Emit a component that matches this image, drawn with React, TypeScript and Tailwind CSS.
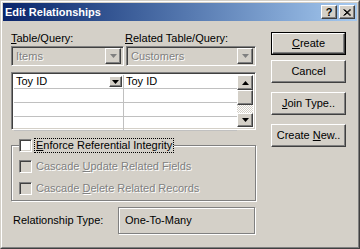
import React from 'react';

const raised =
  'border border-t-white border-l-white border-r-[#404040] border-b-[#404040] shadow-[inset_-1px_-1px_0_#808080] bg-[#d4d0c8]';
const sunken =
  'border border-t-[#808080] border-l-[#808080] border-r-white border-b-white shadow-[inset_1px_1px_0_#404040,inset_-1px_-1px_0_#d4d0c8]';
const etched = 'border border-[#808080] shadow-[inset_1px_1px_0_#fff,1px_1px_0_#fff]';
const disabledText = 'text-[#808080] [text-shadow:1px_1px_0_#fff]';

const Arrow: React.FC<{ dir: 'up' | 'down'; color?: string }> = ({ dir, color = '#000' }) => (
  <svg width="7" height="4" viewBox="0 0 7 4">
    {dir === 'down' ? (
      <polygon points="0,0 7,0 3.5,4" fill={color} />
    ) : (
      <polygon points="0,4 7,4 3.5,0" fill={color} />
    )}
  </svg>
);

const DropBtn: React.FC<{ disabled?: boolean; className?: string }> = ({ disabled, className }) => (
  <div className={`${raised} flex items-center justify-center ${className ?? ''}`}>
    <Arrow dir="down" color={disabled ? '#808080' : '#000'} />
  </div>
);

const Combo: React.FC<{ value: string; width: string }> = ({ value, width }) => (
  <div className={`${sunken} ${width} h-[20px] bg-[#d4d0c8] flex items-center p-[2px]`}>
    <span className={`flex-1 pl-[2px] ${disabledText}`}>{value}</span>
    <DropBtn disabled className="w-[16px] h-[16px]" />
  </div>
);

const Check: React.FC<{ disabled?: boolean }> = ({ disabled }) => (
  <div
    className={`w-[13px] h-[13px] shrink-0 border border-t-[#808080] border-l-[#808080] border-r-white border-b-white shadow-[inset_1px_1px_0_#404040,inset_-1px_-1px_0_#d4d0c8] ${
      disabled ? 'bg-[#d4d0c8]' : 'bg-white'
    }`}
  />
);

const Button: React.FC<{ children: React.ReactNode; isDefault?: boolean; className?: string }> = ({
  children,
  isDefault,
  className,
}) =>
  isDefault ? (
    <div className={`border border-black w-[75px] h-[23px] ${className ?? ''}`}>
      <div className={`${raised} w-full h-full flex items-center justify-center`}>{children}</div>
    </div>
  ) : (
    <div className={`${raised} w-[75px] h-[23px] flex items-center justify-center ${className ?? ''}`}>
      {children}
    </div>
  );

const App: React.FC = () => {
  return (
    <div className="w-[360px] h-[249px] bg-[#d4d0c8] border border-t-[#d4d0c8] border-l-[#d4d0c8] border-r-[#404040] border-b-[#404040] font-['Liberation_Sans',Arial,sans-serif] text-[11px] leading-[13px] text-black overflow-hidden">
      <div className="h-full border border-t-white border-l-white border-r-[#808080] border-b-[#808080] p-[1px]">
        {/* title bar */}
        <div className="h-[18px] bg-gradient-to-r from-[#0a246a] to-[#a6caf0] flex items-center pl-[2px] pr-[2px]">
          <span className="flex-1 text-white font-bold text-[11px]">Edit Relationships</span>
          <div className={`${raised} w-[16px] h-[14px] flex items-center justify-center font-bold text-[11px] leading-none`}>
            ?
          </div>
          <div className={`${raised} w-[16px] h-[14px] flex items-center justify-center ml-[2px]`}>
            <svg width="8" height="7" viewBox="0 0 8 7">
              <path d="M0.5 0.5 L7 6.5 M1.5 0.5 L8 6.5 M7 0.5 L0.5 6.5 M8 0.5 L1.5 6.5" stroke="#000" strokeWidth="1" />
            </svg>
          </div>
        </div>

        <div className="flex pl-[8px] pt-[11px]">
          {/* left column */}
          <div className="w-[245px] flex flex-col">
            <div className="flex">
              <div className="w-[114px]">
                <span className="underline">T</span>able/Query:
              </div>
              <div>
                <span className="underline">R</span>elated Table/Query:
              </div>
            </div>
            <div className="flex gap-[2px] mt-[1px]">
              <Combo value="Items" width="w-[113px]" />
              <Combo value="Customers" width="w-[130px]" />
            </div>

            {/* grid */}
            <div className={`${sunken} bg-white mt-[6px] h-[58px] p-[2px] flex`}>
              <div className="flex-1 flex flex-col">
                {[0, 1, 2, 3].map((i) => (
                  <div key={i} className="h-[14px] flex border-b border-[#c0c0c0] shrink-0">
                    <div className="w-[110px] border-r border-[#c0c0c0] flex items-center pl-[2px]">
                      {i === 0 && (
                        <>
                          <span className="flex-1">Toy ID</span>
                          <DropBtn className="w-[13px] h-[11px] mr-[1px]" />
                        </>
                      )}
                    </div>
                    <div className="flex-1 flex items-center pl-[2px]">{i === 0 && 'Toy ID'}</div>
                  </div>
                ))}
              </div>
              <div className="w-[16px] flex flex-col">
                <div className={`${raised} h-[15px] flex items-center justify-center`}>
                  <Arrow dir="up" />
                </div>
                <div className={`${raised} h-[15px]`} />
                <div className="flex-1 bg-[repeating-conic-gradient(#fff_0%_25%,#d4d0c8_0%_50%)] bg-[length:2px_2px]" />
                <div className={`${raised} h-[14px] flex items-center justify-center`}>
                  <Arrow dir="down" />
                </div>
              </div>
            </div>

            {/* integrity group */}
            <div className={`${etched} mt-[15px] h-[56px] ml-[0px] flex flex-col pl-[7px]`}>
              <div className="flex items-center -mt-[7px] bg-[#d4d0c8] w-fit pr-[1px]">
                <Check />
                <span className="ml-[3px] px-[1px] outline outline-1 outline-dotted outline-black">
                  <span className="underline">E</span>nforce Referential Integrity
                </span>
              </div>
              <div className="flex items-center mt-[8px]">
                <Check disabled />
                <span className={`ml-[4px] ${disabledText}`}>
                  Cascade <span className="underline">U</span>pdate Related Fields
                </span>
              </div>
              <div className="flex items-center mt-[9px]">
                <Check disabled />
                <span className={`ml-[4px] ${disabledText}`}>
                  Cascade <span className="underline">D</span>elete Related Records
                </span>
              </div>
            </div>

            {/* relationship type */}
            <div className="flex items-center mt-[6px]">
              <span className="w-[107px] pl-[2px]">Relationship Type:</span>
              <div className={`${etched} w-[137px] h-[27px] flex items-center pl-[6px]`}>One-To-Many</div>
            </div>
          </div>

          {/* right buttons */}
          <div className="ml-[15px] flex flex-col">
            <Button isDefault>
              <span>
                <span className="underline">C</span>reate
              </span>
            </Button>
            <Button className="mt-[5px]">Cancel</Button>
            <Button className="mt-[9px]">
              <span>
                <span className="underline">J</span>oin Type..
              </span>
            </Button>
            <Button className="mt-[9px]">
              <span>
                Create <span className="underline">N</span>ew..
              </span>
            </Button>
          </div>
        </div>
      </div>
    </div>
  );
};

export default App;
